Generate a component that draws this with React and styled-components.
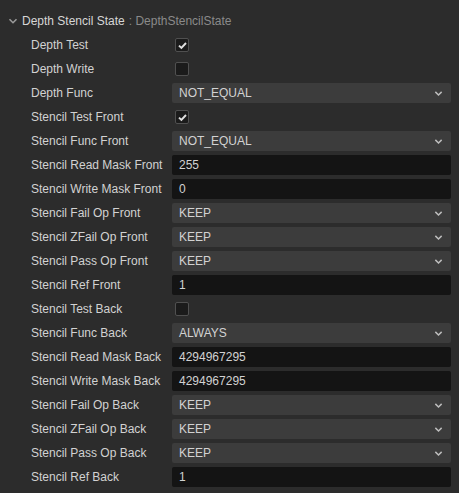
import styled, { createGlobalStyle } from 'styled-components'

const GlobalStyle = createGlobalStyle`
  html, body {
    margin: 0;
    padding: 0;
    background: #2c2c2c;
  }
  body {
    font-family: 'Liberation Sans', Arial, sans-serif;
    font-size: 12px;
    color: #d2d2d2;
  }
`

const rows = [
  { label: 'Depth Test', type: 'check', value: true },
  { label: 'Depth Write', type: 'check', value: false },
  { label: 'Depth Func', type: 'select', value: 'NOT_EQUAL' },
  { label: 'Stencil Test Front', type: 'check', value: true },
  { label: 'Stencil Func Front', type: 'select', value: 'NOT_EQUAL' },
  { label: 'Stencil Read Mask Front', type: 'input', value: '255' },
  { label: 'Stencil Write Mask Front', type: 'input', value: '0' },
  { label: 'Stencil Fail Op Front', type: 'select', value: 'KEEP' },
  { label: 'Stencil ZFail Op Front', type: 'select', value: 'KEEP' },
  { label: 'Stencil Pass Op Front', type: 'select', value: 'KEEP' },
  { label: 'Stencil Ref Front', type: 'input', value: '1' },
  { label: 'Stencil Test Back', type: 'check', value: false },
  { label: 'Stencil Func Back', type: 'select', value: 'ALWAYS' },
  { label: 'Stencil Read Mask Back', type: 'input', value: '4294967295' },
  { label: 'Stencil Write Mask Back', type: 'input', value: '4294967295' },
  { label: 'Stencil Fail Op Back', type: 'select', value: 'KEEP' },
  { label: 'Stencil ZFail Op Back', type: 'select', value: 'KEEP' },
  { label: 'Stencil Pass Op Back', type: 'select', value: 'KEEP' },
  { label: 'Stencil Ref Back', type: 'input', value: '1' },
]

const Chevron = ({ size = 9, color = '#bdbdbd' }) => (
  <svg width={size} height={size} viewBox='0 0 10 10'>
    <path d='M1.5 3.2 L5 6.7 L8.5 3.2' fill='none' stroke={color} strokeWidth='1.6' />
  </svg>
)

const Check = () => (
  <svg width='11' height='11' viewBox='0 0 11 11'>
    <path d='M2 5.6 L4.4 8 L9 3' fill='none' stroke='#e0e0e0' strokeWidth='1.9' />
  </svg>
)

const App = () => {
  return (
    <Panel>
      <GlobalStyle />
      <Header>
        <HeaderArrow>
          <Chevron size={10} color='#9a9a9a' />
        </HeaderArrow>
        <Title>Depth Stencil State</Title>
        <TypeName>: DepthStencilState</TypeName>
      </Header>
      {rows.map((row) => (
        <Row key={row.label}>
          <Label>{row.label}</Label>
          {row.type === 'check' && (
            <CheckBox>{row.value && <Check />}</CheckBox>
          )}
          {row.type === 'select' && (
            <Select>
              <span>{row.value}</span>
              <Chevron />
            </Select>
          )}
          {row.type === 'input' && <Input>{row.value}</Input>}
        </Row>
      ))}
    </Panel>
  )
}

const Panel = styled.div`
  padding: 9px 8px 4px 0;
`

const Header = styled.div`
  display: flex;
  align-items: center;
  height: 24px;
  font-size: 12px;
`

const HeaderArrow = styled.span`
  display: flex;
  align-items: center;
  justify-content: center;
  width: 10px;
  margin: 0 4px 0 8px;
`

const Title = styled.span`
  color: #d6d6d6;
`

const TypeName = styled.span`
  color: #8a8a8a;
  margin-left: 4px;
`

const Row = styled.div`
  display: grid;
  grid-template-columns: 141px 1fr;
  align-items: center;
  height: 24px;
  padding-left: 31px;
`

const Label = styled.div`
  white-space: nowrap;
  overflow: hidden;
  color: #d2d2d2;
`

const CheckBox = styled.div`
  box-sizing: border-box;
  width: 14px;
  height: 14px;
  margin-left: 3px;
  background: #1b1b1b;
  border: 1px solid #505050;
  border-radius: 2px;
  display: flex;
  align-items: center;
  justify-content: center;
`

const Field = styled.div`
  box-sizing: border-box;
  height: 20px;
  border-radius: 2px;
  display: flex;
  align-items: center;
  padding: 0 8px 0 7px;
  color: #d2d2d2;
`

const Select = styled(Field)`
  background: #3c3c3c;
  justify-content: space-between;
`

const Input = styled(Field)`
  background: #141414;
`

export default App
